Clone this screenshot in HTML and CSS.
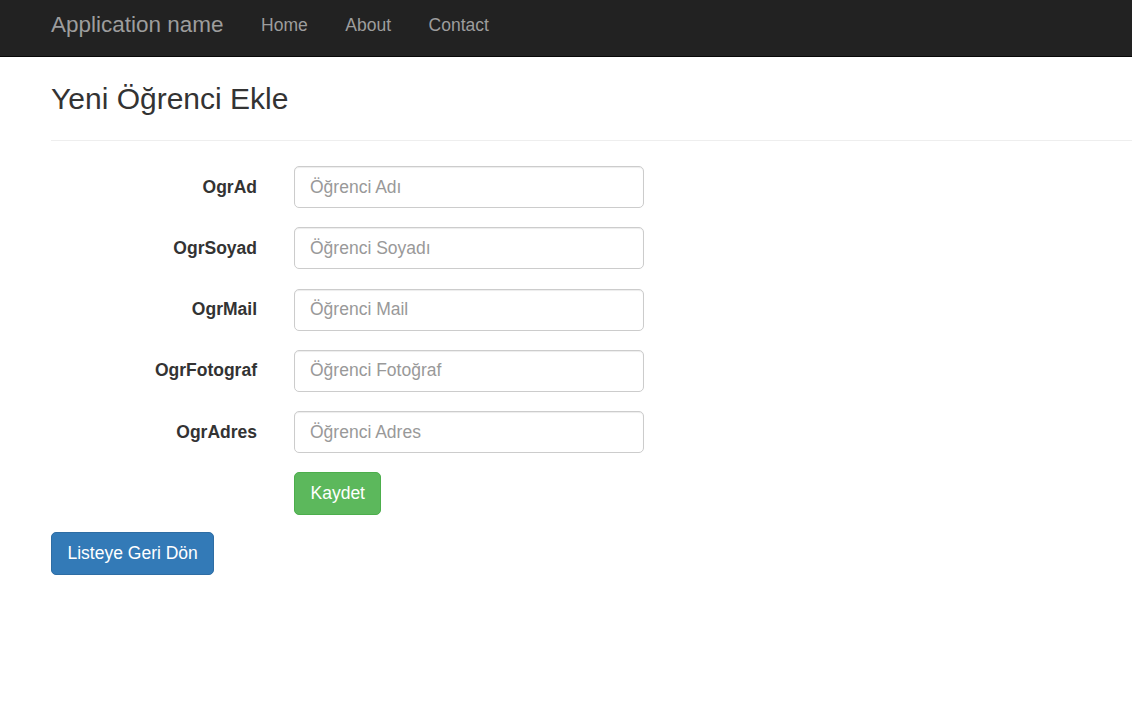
FILE: index.html
```html
<!DOCTYPE html>
<html lang="tr">
<head>
<meta charset="utf-8">
<title>Yeni Öğrenci Ekle</title>
<link rel="stylesheet" href="styles.css">
</head>
<body>
<nav class="navbar">
  <a class="brand" href="#">Application name</a>
  <ul class="nav">
    <li><a href="#">Home</a></li>
    <li><a href="#">About</a></li>
    <li><a href="#">Contact</a></li>
  </ul>
</nav>
<main class="content">
  <h2 class="title">Yeni Öğrenci Ekle</h2>
  <hr class="divider">
  <form class="form">
    <div class="form-group">
      <label class="label" for="ad">OgrAd</label>
      <input class="input" id="ad" type="text" placeholder="Öğrenci Adı">
    </div>
    <div class="form-group">
      <label class="label" for="soyad">OgrSoyad</label>
      <input class="input" id="soyad" type="text" placeholder="Öğrenci Soyadı">
    </div>
    <div class="form-group">
      <label class="label" for="mail">OgrMail</label>
      <input class="input" id="mail" type="text" placeholder="Öğrenci Mail">
    </div>
    <div class="form-group">
      <label class="label" for="foto">OgrFotograf</label>
      <input class="input" id="foto" type="text" placeholder="Öğrenci Fotoğraf">
    </div>
    <div class="form-group">
      <label class="label" for="adres">OgrAdres</label>
      <input class="input" id="adres" type="text" placeholder="Öğrenci Adres">
    </div>
    <div class="form-group">
      <span class="label"></span>
      <button class="btn btn-success" type="button">Kaydet</button>
    </div>
  </form>
  <div class="back">
    <a class="btn btn-primary" href="#">Listeye Geri Dön</a>
  </div>
</main>
</body>
</html>
```

FILE: styles.css
```css
* { box-sizing: border-box; }

html, body {
  margin: 0;
  padding: 0;
  background: #fff;
}

body {
  font-family: "Liberation Sans", Arial, sans-serif;
  font-size: 17.5px;
  line-height: 25px;
  color: #333;
}

.navbar {
  display: flex;
  align-items: flex-start;
  height: 57px;
  background: #222;
  border-bottom: 1px solid #080808;
  padding-left: 51px;
}

.brand {
  display: block;
  padding: 12px 18.75px 0 0;
  font-size: 22.5px;
  line-height: 25px;
  color: #9d9d9d;
  text-decoration: none;
}

.nav {
  display: flex;
  list-style: none;
  margin: 0;
  padding: 0;
}

.nav a {
  display: block;
  padding: 12.5px 18.75px 0;
  font-size: 17.5px;
  line-height: 25px;
  color: #9d9d9d;
  text-decoration: none;
}

.content {
  padding-left: 51px;
}

.title {
  margin: 25px 0 0;
  font-size: 30px;
  line-height: 33px;
  font-weight: 500;
  color: #333;
}

.divider {
  margin: 25px 0 0;
  border: 0;
  border-top: 1px solid #eee;
  height: 0;
}

.form {
  padding-top: 25px;
  margin-bottom: 17px;
}

.form-group {
  display: flex;
  align-items: center;
  margin-bottom: 19.25px;
}

.form-group:last-child {
  margin-bottom: 0;
}

.label {
  width: 206px;
  margin-right: 37px;
  text-align: right;
  font-weight: bold;
  color: #333;
}

.input {
  width: 350px;
  height: 42px;
  padding: 0 15px;
  font-family: inherit;
  font-size: 17.5px;
  color: #555;
  background: #fff;
  border: 1px solid #ccc;
  border-radius: 5px;
  box-shadow: inset 0 1px 1px rgba(0, 0, 0, 0.075);
  outline: none;
}

.input::placeholder {
  color: #999;
  opacity: 1;
}

.btn {
  display: inline-flex;
  align-items: center;
  justify-content: center;
  height: 43px;
  padding: 0 15.5px;
  font-family: inherit;
  font-size: 17.5px;
  line-height: 25px;
  color: #fff;
  border: 1px solid transparent;
  border-radius: 5px;
  text-decoration: none;
  cursor: pointer;
}

.btn-success {
  background: #5cb85c;
  border-color: #4cae4c;
}

.btn-primary {
  background: #337ab7;
  border-color: #2e6da4;
}
```
